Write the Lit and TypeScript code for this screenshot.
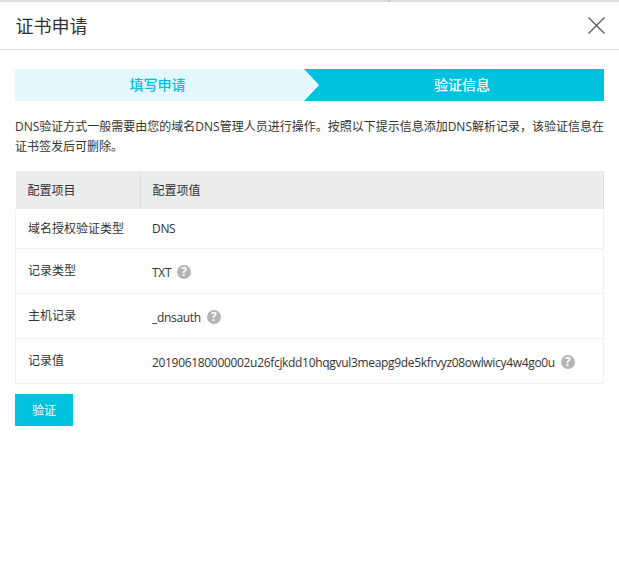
import { LitElement, html, css, nothing } from "lit";
import { customElement } from "lit/decorators.js";

const rows: { label: string; value: string; help: boolean }[] = [
  { label: "域名授权验证类型", value: "DNS", help: false },
  { label: "记录类型", value: "TXT", help: true },
  { label: "主机记录", value: "_dnsauth", help: true },
  { label: "记录值", value: "201906180000002u26fcjkdd10hqgvul3meapg9de5kfrvyz08owlwicy4w4go0u", help: true },
];

@customElement("app-root")
export class AppRoot extends LitElement {
  static styles = css`
    :host {
      display: block;
      width: 619px;
      height: 573px;
      overflow: hidden;
      background: #fff;
      color: #333;
      font-family: "Open Sans", "Noto Sans CJK SC", sans-serif;
      font-size: 12px;
    }
    .strip { height: 2px; background: #dcdcdc; display: flex; }
    .strip i { display: block; margin-left: 388px; width: 2px; background: #c8c8c8; }
    .header {
      height: 47px;
      border-bottom: 1px solid #ddd;
      display: flex;
      align-items: center;
      justify-content: space-between;
      padding: 0 14px 0 15.5px;
    }
    .title { font-size: 18px; color: #333; line-height: 24px; margin-top: 1px; }
    .close { display: block; margin-top: 0; }
    .body { padding: 19px 15px 0; }
    .steps { display: flex; height: 32px; font-size: 14px; font-weight: 500; line-height: 31px; text-align: center; }
    .step { display: flex; justify-content: center; }
    .step1 { background: #e3f8fd; color: #00c1de; clip-path: polygon(0 0, 288px 0, 302px 16px, 288px 32px, 0 32px); flex: 0 0 285px; padding-right: 18px; }
    .step2 { background: #00c1de; color: #fff; clip-path: polygon(0 0, 100% 0, 100% 100%, 0 100%, 15px 16px); margin-left: -14px; flex: 1 1 0; padding-left: 16px; }
    .intro { margin: 16px 0 0; line-height: 20px; color: #333; height: 40px; }
    table {
      width: 589px;
      margin-top: 14px;
      border-collapse: collapse;
      table-layout: fixed;
    }
    th, td { text-align: left; font-weight: 400; padding: 0 12px; color: #333; }
    th { height: 38px; background: #ebecec; }
    th:first-child { width: 100px; border-right: 1px solid #dcdedf; }
    th:last-child { border-right: 1px solid #dcdedf; }
    td { border: 1px solid #f0f1f1; border-top: 0; height: 44px; }
    td:first-child { border-right: 0; position: relative; top: -1px; }
    td:last-child { border-left: 0; }
    tr.first td { height: 39px; }
    tr.first .value { top: 0; }
    .value { display: inline-flex; align-items: center; gap: 6px; letter-spacing: -0.32px; position: relative; top: 1px; }
    .help {
      width: 14px; height: 14px; border-radius: 50%;
      background: #b4b4b4; color: #fff;
      font-size: 12px; font-weight: 700; line-height: 14px; text-align: center;
      letter-spacing: 0;
      flex: none;
    }
    button {
      display: block;
      margin-top: 10px;
      width: 58px;
      height: 32px;
      border: 0;
      padding: 0;
      background: #00c1de;
      color: #fff;
      font: inherit;
    }
  `;

  render() {
    return html`
      <div class="strip"><i></i></div>
      <div class="header">
        <div class="title">证书申请</div>
        <svg class="close" width="17" height="17" viewBox="0 0 17 17" fill="none" stroke="#555" stroke-width="1.2">
          <path d="M.5.5l16 16M16.500.5l-16 16" />
        </svg>
      </div>
      <div class="body">
        <div class="steps">
          <div class="step step1">填写申请</div>
          <div class="step step2">验证信息</div>
        </div>
        <p class="intro">DNS验证方式一般需要由您的域名DNS管理人员进行操作。按照以下提示信息添加DNS解析记录，该验证信息在证书签发后可删除。</p>
        <table>
          <thead>
            <tr><th>配置项目</th><th>配置项值</th></tr>
          </thead>
          <tbody>
            ${rows.map(
              (r, i) => html`<tr class=${i === 0 ? "first" : ""}>
                <td>${r.label}</td>
                <td>
                  <span class="value">${r.value}${r.help ? html`<span class="help">?</span>` : nothing}</span>
                </td>
              </tr>`
            )}
          </tbody>
        </table>
        <button>验证</button>
      </div>
    `;
  }
}
